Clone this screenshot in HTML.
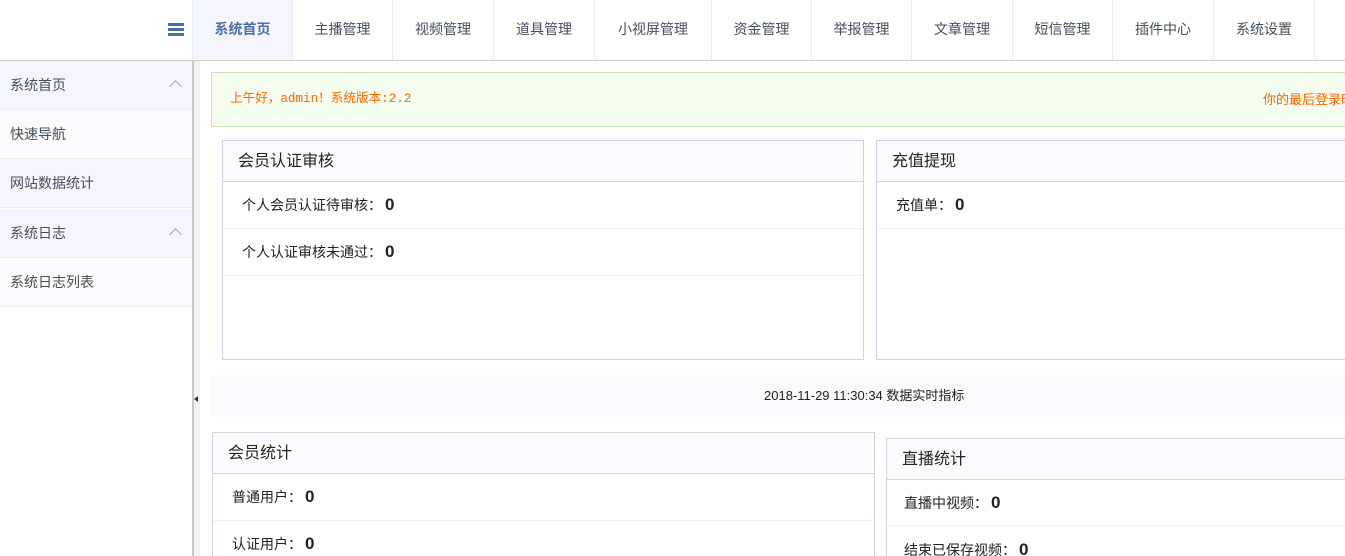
<!DOCTYPE html>
<html style="width:1345px;height:556px;overflow:hidden"><head><meta charset="utf-8"><style>
*{margin:0;padding:0;box-sizing:border-box}
body{width:1345px;height:556px;overflow:hidden;background:#fff;font-family:"Liberation Sans","Noto Sans CJK SC",sans-serif;position:relative;color:#333}
.top{position:absolute;left:0;top:0;width:1345px;height:61px;border-bottom:1px solid #ccc;background:#fff}
.ham{position:absolute;left:168px;top:23px;width:16px;height:13px}
.ham i{display:block;height:3px;background:#4a6fac;margin-bottom:2px}
.tab{position:absolute;top:0;height:60px;line-height:58px;text-align:center;font-size:14px;color:#44505c;border-right:1px solid #e9ebf2}
.tab.on{background:#f5f6fd;color:#4a6fac;font-weight:bold;border-left:1px solid #e9ebf2}
.side{position:absolute;left:0;top:61px;width:192px;height:495px;background:#fff}
.si{position:absolute;left:0;width:192px;height:49px;line-height:48px;padding-left:10px;font-size:14px;color:#44505c;border-bottom:1px solid #eceef3}
.si.h{background:#f5f6fd}.si.s{background:#fdfaff}
.si .ch{position:absolute;right:12px;top:21px;width:9px;height:9px;border-left:1px solid #aaa;border-top:1px solid #aaa;transform:rotate(45deg)}
.bar{position:absolute;left:192px;top:61px;width:2px;height:495px;background:#c8c8c8}
.strip{position:absolute;left:194px;top:61px;width:6px;height:495px;background:#f3f3f3}
.notice{position:absolute;left:211px;top:72px;width:1140px;height:55px;background:#f5fdee;border:1px solid #c5e5b5;color:#ff6600;font-size:13px;line-height:53px;overflow:hidden}
.panel{position:absolute;border:1px solid #cdd5e5;background:#fff}
.ph{height:41px;line-height:41px;background:#fdfaff;border-bottom:1px solid #cdd5e5;padding-left:15px;font-size:16px;color:#222}
.row{height:47px;line-height:46px;border-bottom:1px solid #eef0f5;padding-left:19px;font-size:14px;color:#222}
.row b{font-size:17px;margin-left:3px}
.ts{position:absolute;left:211px;top:375px;width:1140px;height:42px;background:#fdfaff;line-height:42px;font-size:13px;color:#222;padding-left:553px}
</style></head><body>
<div class="top">
<div class="ham"><i></i><i></i><i></i></div>
<div class="tab on" style="left:192px;width:101px">系统首页</div>
<div class="tab" style="left:293px;width:100px">主播管理</div>
<div class="tab" style="left:393px;width:101px">视频管理</div>
<div class="tab" style="left:494px;width:101px">道具管理</div>
<div class="tab" style="left:595px;width:117px">小视屏管理</div>
<div class="tab" style="left:712px;width:100px">资金管理</div>
<div class="tab" style="left:812px;width:100px">举报管理</div>
<div class="tab" style="left:912px;width:101px">文章管理</div>
<div class="tab" style="left:1013px;width:100px">短信管理</div>
<div class="tab" style="left:1113px;width:101px">插件中心</div>
<div class="tab" style="left:1214px;width:101px">系统设置</div>
</div>
<div class="side">
<div class="si h" style="top:0">系统首页<span class="ch"></span></div>
<div class="si s" style="top:49px">快速导航</div>
<div class="si h" style="top:98px">网站数据统计</div>
<div class="si h" style="top:148px">系统日志<span class="ch"></span></div>
<div class="si s" style="top:197px">系统日志列表</div>
</div>
<div class="bar"></div><div class="strip"></div>
<div style="position:absolute;left:194px;top:396px;width:0;height:0;border-top:3px solid transparent;border-bottom:3px solid transparent;border-right:4px solid #333"></div>
<div class="notice"><span style="position:absolute;left:18px;font-family:'Liberation Mono','Noto Sans CJK SC',monospace;font-size:12.6px;white-space:nowrap">上午好，admin！系统版本:2.2</span><span style="position:absolute;left:1051px;white-space:nowrap">你的最后登录时间</span></div>
<div class="panel" style="left:222px;top:140px;width:642px;height:220px"><div class="ph">会员认证审核</div>
<div class="row">个人会员认证待审核：<b>0</b></div><div class="row">个人认证审核未通过：<b>0</b></div></div>
<div class="panel" style="left:876px;top:140px;width:480px;height:220px"><div class="ph">充值提现</div>
<div class="row">充值单：<b>0</b></div><div class="row" style="border:0"></div></div>
<div class="ts">2018-11-29 11:30:34 数据实时指标</div>
<div class="panel" style="left:212px;top:432px;width:663px;height:140px"><div class="ph">会员统计</div>
<div class="row">普通用户：<b>0</b></div><div class="row">认证用户：<b>0</b></div></div>
<div class="panel" style="left:886px;top:438px;width:470px;height:140px"><div class="ph">直播统计</div>
<div class="row" style="padding-left:17px">直播中视频：<b>0</b></div><div class="row" style="padding-left:17px">结束已保存视频：<b>0</b></div></div>
</body></html>
